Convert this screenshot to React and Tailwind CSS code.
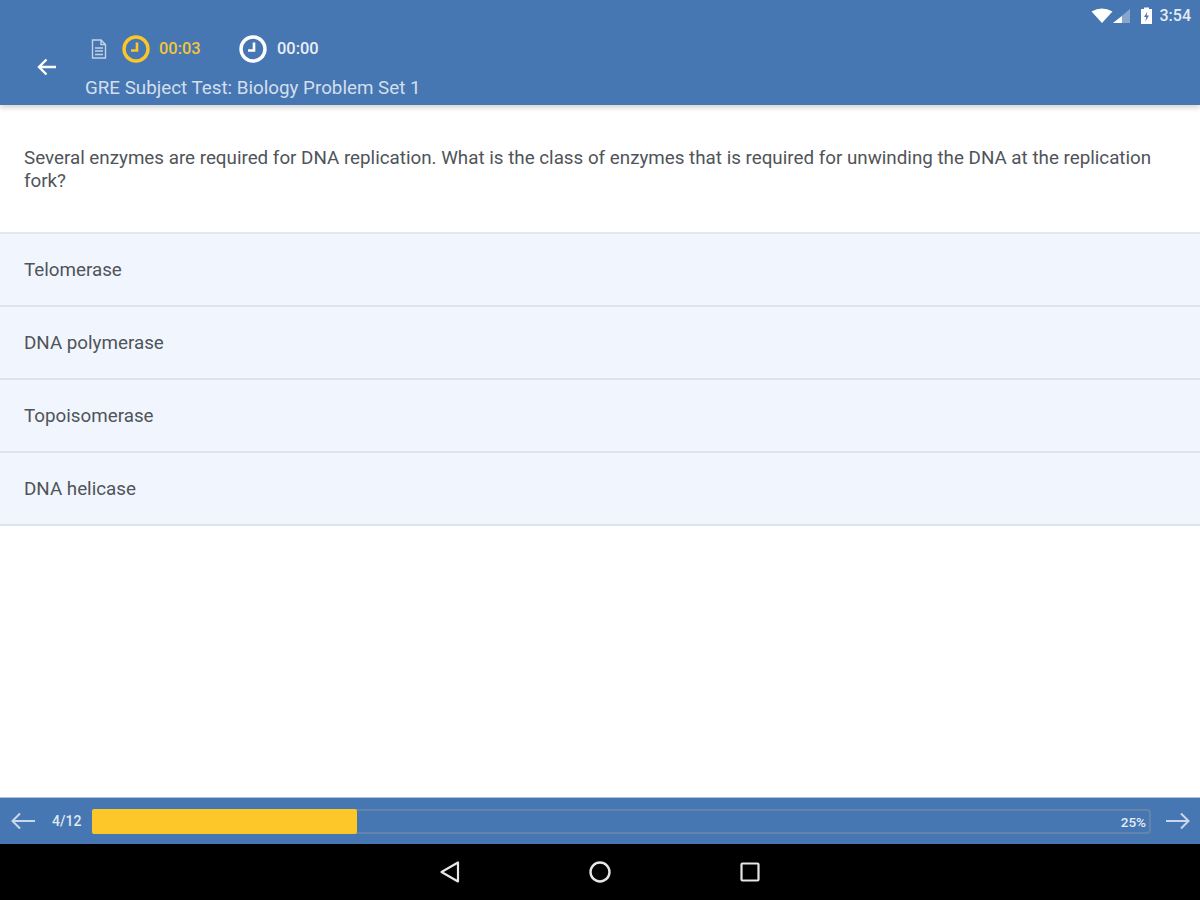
import React from "react";

const Clock = ({ color, size = 28 }) => (
  <svg width={size} height={size} viewBox="0 0 28 28" fill="none" stroke={color}>
    <circle cx="14" cy="14" r="12" strokeWidth="3.4" />
    <path d="M15 7.5 V15.5 H9" strokeWidth="2.6" />
  </svg>
);

const rows = ["Telomerase", "DNA polymerase", "Topoisomerase", "DNA helicase"];

export default function App() {
  return (
    <div className="w-[1200px] h-[900px] flex flex-col bg-white overflow-hidden font-['Roboto',sans-serif]">
      <header className="h-[105px] bg-[#4677b2] flex flex-col shrink-0 shadow-[0_3px_5px_rgba(0,0,0,0.16)] relative z-10">
        <div className="h-[32px] flex items-center justify-end pr-[9px]">
          <svg width="40" height="18" viewBox="0 0 40 18">
            <path d="M11 16 L0.5 4.5 Q11 -1.5 21.5 4.5 Z" fill="#fff" />
            <path d="M39 2 V16 H22 Z" fill="#fff" fillOpacity="0.35" />
            <path d="M31 9 V16 H22 Z" fill="#fff" />
          </svg>
          <svg width="13" height="18" viewBox="0 0 13 18" className="ml-[9px]">
            <path d="M4 0.5 H9 V2 H12 V17 H1 V2 H4 Z" fill="#fff" />
            <path d="M7.4 4.5 L4 10 H6.2 L5.4 14.5 L9 8.5 H6.6 Z" fill="#4677b2" />
          </svg>
          <span className="ml-[7px] text-[16px] leading-none font-medium text-[#e4ecf5]">3:54</span>
        </div>
        <div className="flex-1 flex">
          <div className="w-[85px] flex justify-start pl-[36px] pt-[24px]">
            <svg width="22" height="22" viewBox="0 0 22 22" fill="none" stroke="#fff" strokeWidth="2.4">
              <path d="M20 11 H3 M10.5 3.5 L3 11 L10.5 18.5" />
            </svg>
          </div>
          <div className="flex flex-col">
            <div className="h-[34px] flex items-center">
              <svg width="16" height="20" viewBox="0 0 16 20" fill="none" stroke="#c3d3e6" strokeWidth="1.4" className="ml-[6px]">
                <path d="M1.5 1 H10 L14.5 5.5 V19 H1.5 Z M10 1 V5.5 H14.5 M4 9 H12 M4 12 H12 M4 15.5 H12" />
              </svg>
              <div className="ml-[15px]"><Clock color="#fbc62a" /></div>
              <span className="ml-[9px] text-[16.4px] font-medium text-[#f3c53a] w-[80px]">00:03</span>
              <Clock color="#ffffff" />
              <span className="ml-[10px] text-[16.4px] font-medium text-[#e9eff7]">00:00</span>
            </div>
            <div className="text-[18.8px] leading-[24px] mt-[10px] text-[#d3dfed]">GRE Subject Test: Biology Problem Set 1</div>
          </div>
        </div>
      </header>

      <main className="flex-1 flex flex-col">
        <div className="h-[129px] px-[24px] pt-[42px] text-[18.8px] leading-[23px] text-[#4f5459] border-b-2 border-[#e2e8f0]">
          Several enzymes are required for DNA replication. What is the class of enzymes that is required for unwinding the DNA at the replication fork?
        </div>
        {rows.map((r) => (
          <div key={r} className="h-[73px] flex items-center px-[24px] pt-[2px] bg-[#f1f6fe] border-b-2 border-[#dbe4f0] text-[18.8px] text-[#4f5459]">
            {r}
          </div>
        ))}
      </main>

      <div className="h-[47px] bg-[#4677b2] border-t border-[#a9c2df] flex items-center shrink-0">
        <svg width="26" height="20" viewBox="0 0 26 20" fill="none" stroke="#c9d8ea" strokeWidth="2" className="ml-[10px]">
          <path d="M25 10 H3 M10 2.5 L2.5 10 L10 17.5" />
        </svg>
        <span className="ml-[16px] text-[14px] font-medium text-[#dfe8f3] w-[40px]">4/12</span>
        <div className="w-[1059px] h-[25px] rounded-[4px] border-2 border-[#6484ad] relative">
          <div className="absolute left-[-2px] top-[-2px] w-[265px] h-[25px] bg-[#fdc629] rounded-[2px]" />
          <span className="absolute right-[3px] top-[3px] text-[13.5px] leading-[16px] font-medium text-[#e4ecf5]">25%</span>
        </div>
        <svg width="26" height="20" viewBox="0 0 26 20" fill="none" stroke="#c9d8ea" strokeWidth="2" className="ml-[14px]">
          <path d="M1 10 H23 M16 2.5 L23.5 10 L16 17.5" />
        </svg>
      </div>

      <nav className="h-[56px] bg-black flex items-center justify-center gap-[128px] shrink-0">
        <svg width="22" height="24" viewBox="0 0 22 24" fill="none" stroke="#e6e6e6" strokeWidth="2.2" strokeLinejoin="round">
          <path d="M19 2.5 V21.5 L2.5 12 Z" />
        </svg>
        <svg width="22" height="24" viewBox="0 0 22 24" fill="none" stroke="#e6e6e6" strokeWidth="2.4">
          <circle cx="11" cy="12" r="9.5" />
        </svg>
        <svg width="22" height="24" viewBox="0 0 22 24" fill="none" stroke="#e6e6e6" strokeWidth="2.2">
          <rect x="2.5" y="3.5" width="17" height="17" rx="1" />
        </svg>
      </nav>
    </div>
  );
}
